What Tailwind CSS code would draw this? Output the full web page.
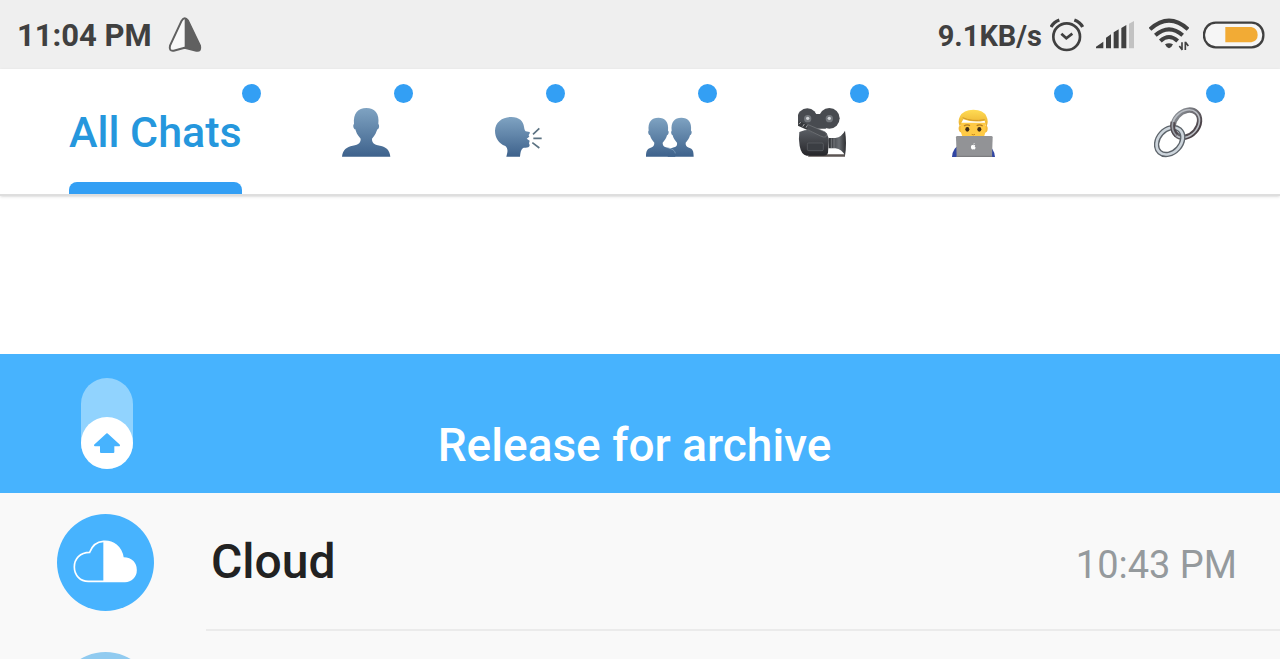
<!DOCTYPE html>
<html lang="en">
<head>
    <meta charset="UTF-8">
    <meta name="viewport" content="width=device-width, initial-scale=1.0">
    <title>Chats</title>
    <script src="https://cdn.jsdelivr.net/npm/@tailwindcss/browser@4"></script>
</head>
<body class="h-screen overflow-hidden bg-white font-['Roboto',sans-serif]">
    <!-- Status bar -->
    <header class="flex h-[69px] items-center justify-between bg-[#efefef] pl-[17px] pr-[15px] font-bold text-[#404040]">
        <div class="flex items-center gap-4">
            <span class="pt-1 text-[31px]">11:04 PM</span>
            <svg class="h-9 w-[34px]" viewBox="0 0 102 108" aria-hidden="true">
                <path d="M52 4 L52 92 L12 101 Q2 101 5 86 L40 11 Q45 4 52 4Z" fill="#f8f8f8"/>
                <path d="M50 4 Q56 3 61 11 L97 86 Q101 104 88 101 L50 92Z" fill="#606060"/>
                <path d="M41 11 Q50 -3 60 11 L96 86 Q100 104 85 101 L50 92 L17 101 Q2 103 6 86Z" fill="none" stroke="#606060" stroke-width="6" stroke-linejoin="round"/>
            </svg>
        </div>
        <div class="flex items-center">
            <span class="pt-1 text-[29px]">9.1KB/s</span>
            <svg class="ml-2 h-[34px] w-[34px]" viewBox="0 0 102 102" fill="none" stroke="#404040" stroke-width="8" aria-hidden="true">
                <circle cx="50" cy="56" r="40"/>
                <path d="M34 47 L49 61 L67 47"/>
                <path d="M3 27 Q11 12 28 6 M73 6 Q90 12 98 27" stroke-width="10"/>
            </svg>
            <svg class="ml-3 h-7 w-[38px]" viewBox="0 0 114 84" fill="#404040" aria-hidden="true">
                <path d="M0 82 V77 L22 62 V82Z M30 82 V50 L45 40 V82Z M53 82 V34 L68 25 V82Z M76 82 V21 L91 12 V82Z"/>
                <path d="M99 82 V8 L114 0 V82Z" fill="#c2c2c2"/>
            </svg>
            <svg class="ml-[15px] h-[34px] w-10" viewBox="0 0 120 102" fill="none" stroke="#404040" stroke-width="12" aria-hidden="true">
                <path d="M3 34 Q60 -18 117 34 M19 52 Q60 16 101 52 M34 69 Q60 45 86 69"/>
                <path d="M48 79 Q60 72 72 79 Q69 87 60 91 Q51 87 48 79Z" fill="#404040" stroke="none"/>
                <path d="M99 73 V96 M91 84 L100 96 M109 71 V96 M109 72 L118 84" stroke-width="5"/>
            </svg>
            <svg class="ml-[14px] h-7 w-[62px]" viewBox="0 0 186 84" aria-hidden="true">
                <rect x="3" y="5" width="178" height="74" rx="35" fill="#f6f6f6" stroke="#404040" stroke-width="7"/>
                <path d="M67 18 H145 Q164 22 164 42 Q164 60 145 64 H67Z" fill="#f2ab35"/>
            </svg>
        </div>
    </header>

    <!-- Folder tabs -->
    <nav class="flex h-[127px] gap-[100px] border-b-2 border-[#dedede] bg-white pl-[69px] shadow-sm">
        <button class="relative flex shrink-0 items-center pt-px text-[43px] font-medium text-[#2597dd]">
            All Chats
            <span class="absolute left-full top-[15px] size-[19px] rounded-full bg-[#339ff4]"></span>
            <span class="absolute inset-x-0 bottom-0 h-3 rounded-t-lg bg-[#339ff4]"></span>
        </button>
        <button class="relative flex w-[52px] shrink-0 items-center pt-px" aria-label="Personal">
            <svg class="size-[52px]" viewBox="0 0 156 156">
                <defs>
                    <linearGradient id="bust" x1="0" y1="0" x2="0" y2="1">
                        <stop offset="0" stop-color="#7fa3c2"/>
                        <stop offset="1" stop-color="#3e628c"/>
                    </linearGradient>
                </defs>
                <path fill="url(#bust)" d="M0 152 C2 130 14 123 32 119 C52 115 56 110 56 98 C46 88 42 78 40 70 C34 70 32 56 36 54 C33 22 48 6 73 6 C98 6 113 22 109 54 C113 56 112 70 106 70 C103 78 100 88 90 98 C90 110 94 115 114 119 C132 123 143 130 145 152Z"/>
            </svg>
            <span class="absolute left-full top-[15px] size-[19px] rounded-full bg-[#339ff4]"></span>
        </button>
        <button class="relative flex w-[52px] shrink-0 items-center pt-px" aria-label="Channels">
            <svg class="size-[52px]" viewBox="0 0 156 156">
                <path fill="url(#bust)" d="M37 152 C42 135 42 128 34 120 C14 112 3 95 3 74 C4 48 26 33 52 33 C76 33 88 46 90 62 C91 68 92 73 95 76 L107 78 C109 83 104 84 104 88 L106 92 L98 98 L107 104 L105 112 L107 118 C106 126 98 125 90 125 C82 127 80 135 78 152Z"/>
                <path d="M117 85 L136 67 M118 97 H143 M115 110 L136 126" stroke="#5b7282" stroke-width="5"/>
            </svg>
            <span class="absolute left-full top-[15px] size-[19px] rounded-full bg-[#339ff4]"></span>
        </button>
        <button class="relative flex w-[52px] shrink-0 items-center pt-px" aria-label="Groups">
            <svg class="size-[52px]" viewBox="0 0 156 156">
                <path fill="url(#bust)" d="M65 152 C67 132 70 127 80 125 C92 122 94 118 93 110 C86 102 82 96 80 88 C75 86 74 76 77 74 C74 48 86 35 106 35 C126 35 138 48 135 74 C139 76 137 86 132 88 C130 96 126 102 119 110 C118 118 122 122 129 125 C140 128 143 134 143 152Z"/>
                <path fill="url(#bust)" d="M0 152 C0 134 4 128 14 125 C22 122 25 118 25 110 C18 102 14 96 12 88 C7 86 5 76 8 74 C5 48 17 35 37 35 C57 35 69 48 66 74 C70 76 68 86 63 88 C61 96 57 102 50 110 C50 118 53 122 64 125 C80 129 87 134 88 152Z"/>
                <path d="M64 125 C80 129 86 133 88 142" fill="none" stroke="#8dacc8" stroke-width="2"/>
            </svg>
            <span class="absolute left-full top-[15px] size-[19px] rounded-full bg-[#339ff4]"></span>
        </button>
        <button class="relative flex w-[52px] shrink-0 items-center pt-px" aria-label="Movies">
            <svg class="size-[52px]" viewBox="0 0 156 156">
                <defs>
                    <linearGradient id="body" x1="0" y1="0" x2="0" y2="1">
                        <stop offset="0" stop-color="#5a5e64"/>
                        <stop offset="1" stop-color="#26262a"/>
                    </linearGradient>
                    <linearGradient id="lens" x1="0" y1="0" x2="1" y2="0">
                        <stop offset="0" stop-color="#303236"/>
                        <stop offset="0.6" stop-color="#6a6e73"/>
                        <stop offset="1" stop-color="#2c2d30"/>
                    </linearGradient>
                </defs>
                <path d="M30 152 L34 145 H141 V152Z" fill="#5c5553"/>
                <path d="M4 78 Q40 62 84 84 Q94 90 92 110 L90 140 Q88 149 76 149 H26 Q10 147 5 120 Q1 98 4 78Z" fill="url(#body)"/>
                <rect x="28" y="111" width="48" height="23" rx="4" fill="#3b3e43" stroke="#62656a" stroke-width="2"/>
                <path d="M92 96 H112 Q132 92 141 74 Q147 112 141 149 Q132 130 112 127 H92Z" fill="url(#lens)"/>
                <path d="M100 97 V126 M108 97 V126" stroke="#8d9094" stroke-width="2"/>
                <circle cx="28" cy="37" r="30" fill="#484b50"/>
                <circle cx="94" cy="37" r="31" fill="#484b50"/>
                <path d="M54 24 H68 L84 68 H40Z" fill="#484b50"/>
                <circle cx="29" cy="38" r="11" fill="#74787d"/>
                <circle cx="94" cy="38" r="11" fill="#74787d"/>
                <circle cx="29" cy="37" r="5" fill="#d2d5d8"/>
                <circle cx="94" cy="37" r="5" fill="#d2d5d8"/>
                <path d="M6 54 L80 87" stroke="#36383c" stroke-width="15" stroke-linecap="round"/>
                <path d="M28 55 L82 78 Q89 85 84 93 Q78 95 68 90 L28 71" fill="#4a4d52" stroke="#7a7d81" stroke-width="2"/>
                <path d="M2 54 L9 49 M14 62 L19 54 M24 65 L28 58" stroke="#a4a6a9" stroke-width="3"/>
            </svg>
            <span class="absolute left-full top-[15px] size-[19px] rounded-full bg-[#339ff4]"></span>
        </button>
        <button class="relative flex w-[104px] shrink-0 items-center pt-px" aria-label="Work">
            <svg class="size-[52px]" viewBox="0 0 156 156">
                <defs>
                    <linearGradient id="hair" x1="0" y1="0" x2="0" y2="1">
                        <stop offset="0" stop-color="#ffdc55"/>
                        <stop offset="1" stop-color="#e9ac2a"/>
                    </linearGradient>
                </defs>
                <path d="M6 153 Q8 124 28 119 H113 Q132 124 135 153Z" fill="#3045a3"/>
                <path d="M32 60 Q25 58 26 70 Q28 80 35 80 H105 Q112 80 113 70 Q114 58 107 60Z" fill="#f3b93a"/>
                <path d="M32 50 H107 V72 Q105 94 92 106 H48 Q34 94 32 72Z" fill="#ffca45"/>
                <path d="M30 64 Q22 46 30 31 Q40 11 70 11 Q101 11 109 31 Q117 46 109 64 L104 44 Q70 51 40 40 Q34 48 30 64Z" fill="url(#hair)"/>
                <path d="M38 35 Q66 48 104 41" fill="none" stroke="#d39a27" stroke-width="3"/>
                <path d="M42 60 Q51 54 60 59 M80 59 Q89 54 98 60" fill="none" stroke="#b57c20" stroke-width="4"/>
                <ellipse cx="52" cy="70" rx="6" ry="7" fill="#3e2b16"/>
                <ellipse cx="88" cy="70" rx="6" ry="7" fill="#3e2b16"/>
                <path d="M65 85 Q70 88 75 85" fill="none" stroke="#c98a1d" stroke-width="3"/>
                <path d="M18 94 Q18 90 22 90 H124 Q128 90 128 94 L126 153 H20Z" fill="#929396"/>
                <path d="M20 151 H127" stroke="#77787b" stroke-width="3"/>
                <path d="M70 118 C64 115 62 121 63 125 C65 131 68 131 70 130 C73 131 75 130 77 125 C73 122 74 119 76 118 C74 116 72 117 70 118Z M70 116 Q70 112 74 111 Q74 115 70 116Z" fill="#fff"/>
            </svg>
            <span class="absolute left-full top-[15px] size-[19px] rounded-full bg-[#339ff4]"></span>
        </button>
        <button class="relative flex w-[52px] shrink-0 items-center pt-px" aria-label="Links">
            <svg class="size-[52px]" viewBox="0 0 156 156" fill="none">
                <defs>
                    <linearGradient id="steel" x1="0" y1="0" x2="0" y2="1">
                        <stop offset="0" stop-color="#85898f"/>
                        <stop offset="1" stop-color="#4b4247"/>
                    </linearGradient>
                </defs>
                <g transform="rotate(-48 97 53)">
                    <ellipse cx="97" cy="53" rx="45" ry="35" stroke="url(#steel)" stroke-width="16"/>
                    <ellipse cx="96" cy="52" rx="46" ry="36" stroke="#b9bdc3" stroke-width="5"/>
                </g>
                <g transform="rotate(-48 47 105)">
                    <ellipse cx="47" cy="105" rx="45" ry="34" stroke="#5d646b" stroke-width="16"/>
                    <ellipse cx="47" cy="105" rx="45" ry="34" stroke="#cdd5dc" stroke-width="8"/>
                </g>
                <!-- near side of the upper link, over the lower one -->
                <path d="M57 48 Q52 74 68 88" stroke="#51494f" stroke-width="15"/>
                <path d="M56 48 Q51 74 67 89" stroke="#9da2a9" stroke-width="5"/>
            </svg>
            <span class="absolute left-full top-[15px] size-[19px] rounded-full bg-[#339ff4]"></span>
        </button>
    </nav>

    <main class="pt-[158px]">
        <!-- Pull-down archive -->
        <section class="flex h-[139px] items-end bg-[#47b3fe] pb-6 pl-[81px] pr-36">
            <div class="flex h-[91px] w-[52px] shrink-0 items-end rounded-full bg-[#91d3fe]">
                <svg class="size-[52px] rounded-full bg-white" viewBox="0 0 156 156" aria-hidden="true">
                    <path d="M78 52 L114 85 H97 V105 H60 V85 H42Z" fill="#47b3fe" stroke="#47b3fe" stroke-width="6" stroke-linejoin="round"/>
                </svg>
            </div>
            <p class="flex-1 text-center text-[46px] font-medium leading-[48px] text-white">Release for archive</p>
        </section>

        <!-- Chat list -->
        <ul class="bg-[#f9f9f9]">
            <li class="flex items-center gap-[52px] pl-[57px]">
                <div class="size-[97px] shrink-0 rounded-full bg-[#47b3fe]">
                    <svg class="size-full" viewBox="0 0 291 291" aria-hidden="true">
                        <path d="M139 82 C168 80 193 98 198 132 C225 130 237 150 237 168 C237 188 222 202 204 202 H139Z" fill="#fff"/>
                        <path d="M139 82 C120 83 105 96 98 115 C69 115 52 135 52 159 C52 184 70 202 94 202 H204 C222 202 237 188 237 168 C237 150 225 131 198 132 C193 98 168 80 139 82Z" fill="none" stroke="#fff" stroke-width="5"/>
                    </svg>
                </div>
                <div class="flex h-[138px] flex-1 items-center border-b-2 border-[#ebebeb] pl-[5px] pr-[43px] pt-2">
                    <div class="flex flex-1 items-baseline justify-between">
                        <h2 class="text-5xl font-medium text-[#222222]">Cloud</h2>
                        <time class="text-[38px] text-[#959a9d]">10:43 PM</time>
                    </div>
                </div>
            </li>
            <li class="flex h-[138px] items-center pl-[57px]">
                <div class="size-[97px] shrink-0 rounded-full bg-[#91cbf0]"></div>
            </li>
        </ul>
    </main>
</body>
</html>
